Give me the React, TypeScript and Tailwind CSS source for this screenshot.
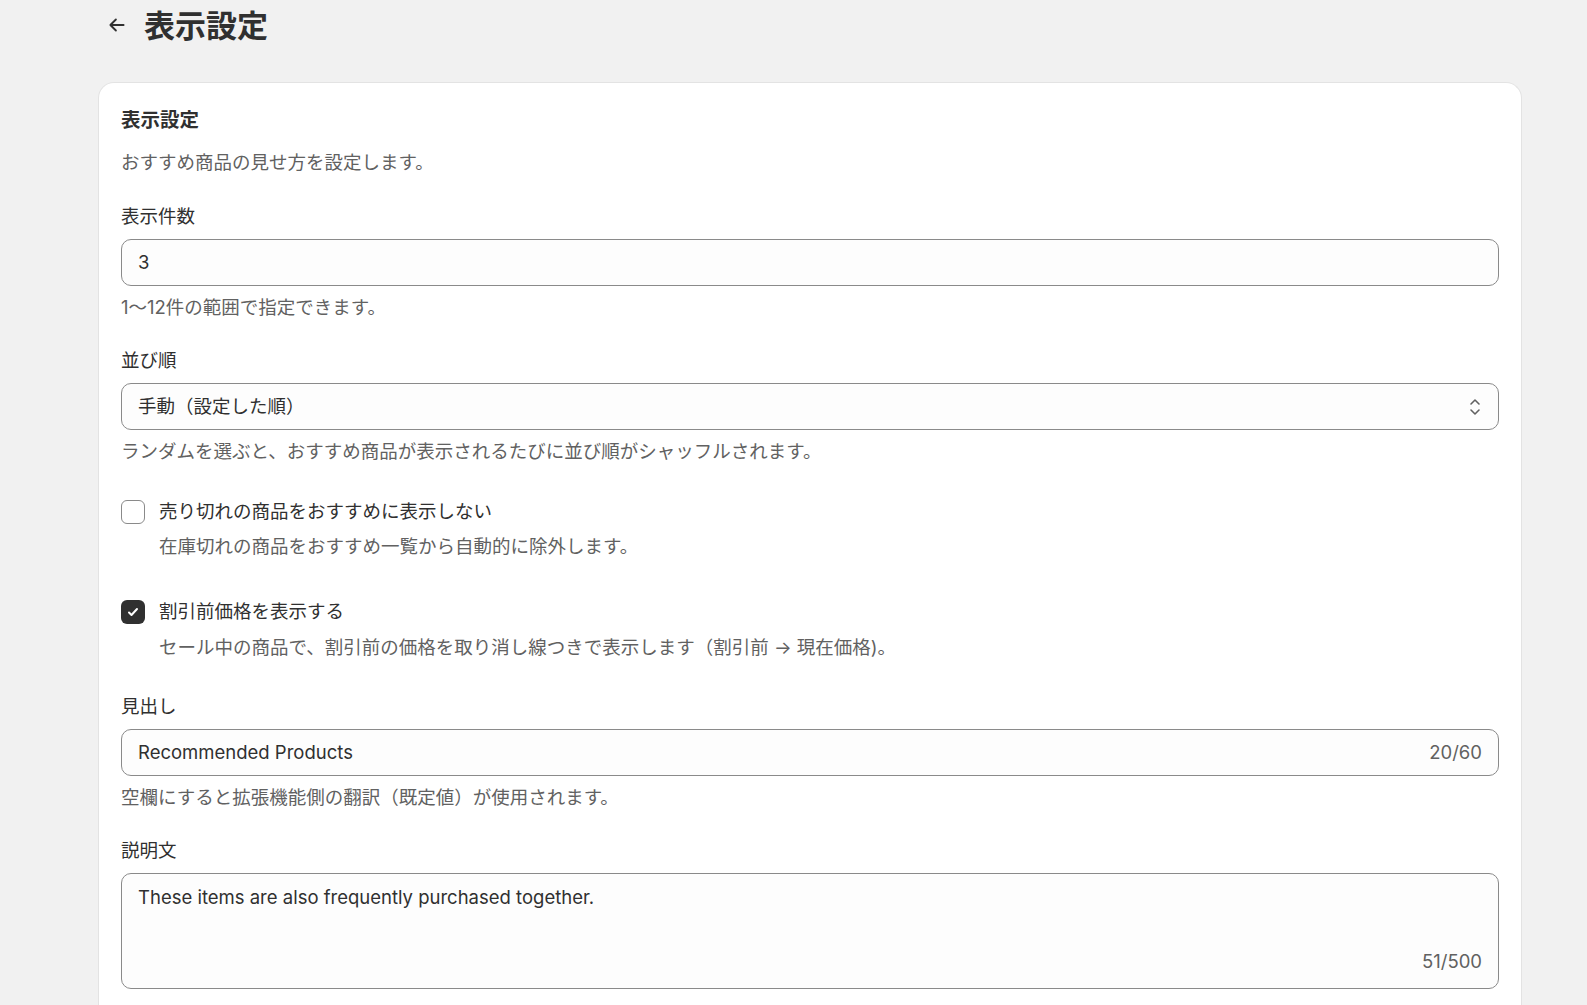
import React from "react";

const font = { fontFamily: 'Inter, "Noto Sans CJK JP", "Noto Sans", sans-serif' };

function Field({ children, h = "h-[47px]" }: { children: React.ReactNode; h?: string }) {
  return (
    <div className={`mt-[10px] ${h} rounded-[10px] border border-[#8a8a8a] bg-[#fdfdfd] px-[16px] flex items-center text-[18.5px] text-[#303030]`}>
      {children}
    </div>
  );
}

export default function App() {
  return (
    <div className="min-h-[1005px] bg-[#f1f1f1] text-[#303030]" style={font}>
      <div className="pl-[98px] pr-[65px]">
        <div className="h-[50px] flex items-center">
          <svg width="22" height="22" viewBox="0 0 20 20" className="ml-[8px] mr-[16px]" fill="none" stroke="#303030" strokeWidth="1.7" strokeLinecap="round" strokeLinejoin="round">
            <path d="M16 10H4M9 5l-5 5 5 5" />
          </svg>
          <h1 className="text-[31px] font-bold leading-none">表示設定</h1>
        </div>
        <div className="mt-[32px] bg-white rounded-t-[16px] border border-[#e3e3e3] border-b-0 px-[22px] pt-[25px] pb-[40px] text-[18.5px]">
          <div className="text-[19.5px] font-bold leading-[25px]">表示設定</div>
          <div className="mt-[17px] leading-[25px] text-[#616161]">おすすめ商品の見せ方を設定します。</div>

          <div className="mt-[29px] leading-[25px]">表示件数</div>
          <Field>3</Field>
          <div className="mt-[9px] leading-[25px] text-[#616161]">1〜12件の範囲で指定できます。</div>

          <div className="mt-[28px] leading-[25px]">並び順</div>
          <Field>
            <span className="flex-1">手動（設定した順）</span>
            <svg width="14" height="22" viewBox="0 0 14 22" fill="none" stroke="#616161" strokeWidth="1.6" strokeLinecap="round" strokeLinejoin="round">
              <path d="M3 8l4-4 4 4M3 14l4 4 4-4" />
            </svg>
          </Field>
          <div className="mt-[9px] leading-[25px] text-[#616161]">ランダムを選ぶと、おすすめ商品が表示されるたびに並び順がシャッフルされます。</div>

          <div className="mt-[35px] flex items-center gap-[14px]">
            <div className="w-[24px] h-[24px] rounded-[6px] border border-[#8a8a8a] bg-white" />
            <div className="leading-[25px]">売り切れの商品をおすすめに表示しない</div>
          </div>
          <div className="mt-[10px] pl-[38px] leading-[25px] text-[#616161]">在庫切れの商品をおすすめ一覧から自動的に除外します。</div>

          <div className="mt-[40px] flex items-center gap-[14px]">
            <div className="w-[24px] h-[24px] rounded-[6px] bg-[#303030] flex items-center justify-center">
              <svg width="14" height="14" viewBox="0 0 14 14" fill="none" stroke="white" strokeWidth="2" strokeLinecap="round" strokeLinejoin="round">
                <path d="M3 7.5l2.5 2.5L11 4" />
              </svg>
            </div>
            <div className="leading-[25px]">割引前価格を表示する</div>
          </div>
          <div className="mt-[11px] pl-[38px] leading-[25px] text-[#616161]">セール中の商品で、割引前の価格を取り消し線つきで表示します（割引前 → 現在価格)。</div>

          <div className="mt-[34px] leading-[25px]">見出し</div>
          <Field>
            <span className="flex-1">Recommended Products</span>
            <span className="text-[#616161]">20/60</span>
          </Field>
          <div className="mt-[9px] leading-[25px] text-[#616161]">空欄にすると拡張機能側の翻訳（既定値）が使用されます。</div>

          <div className="mt-[28px] leading-[25px]">説明文</div>
          <div className="mt-[10px] h-[116px] rounded-[10px] border border-[#8a8a8a] bg-[#fdfdfd] px-[16px] pt-[10px] pb-[12px] flex flex-col text-[#303030]">
            <span className="flex-1">These items are also frequently purchased together.</span>
            <span className="self-end text-[#616161]">51/500</span>
          </div>
        </div>
      </div>
    </div>
  );
}
